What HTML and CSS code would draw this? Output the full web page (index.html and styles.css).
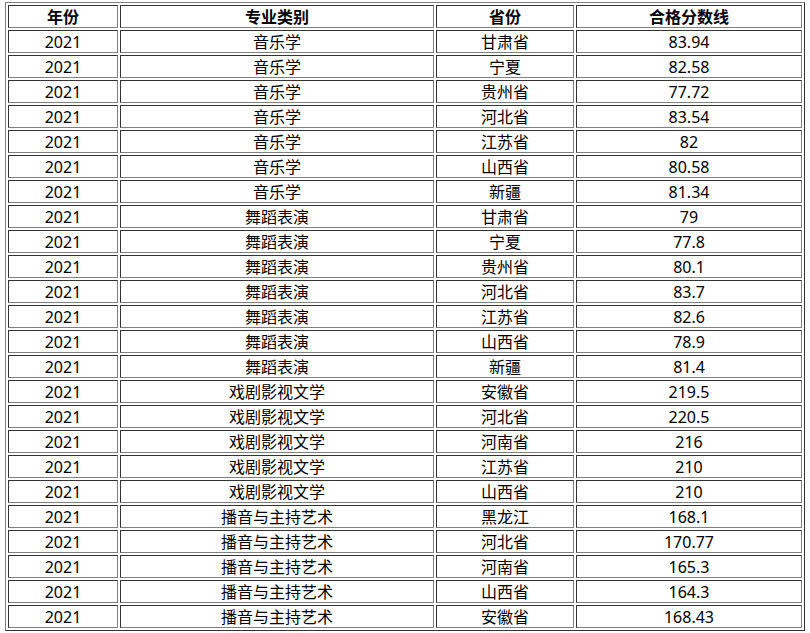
FILE: index.html
```html
<!DOCTYPE html>
<html lang="zh-CN">
<head>
<meta charset="utf-8">
<title>合格分数线</title>
<link rel="stylesheet" href="styles.css">
</head>
<body>
<table class="score-table">
<thead>
<tr><th class="c-year">年份</th><th class="c-major">专业类别</th><th class="c-prov">省份</th><th class="c-score">合格分数线</th></tr>
</thead>
<tbody>
<tr><td>2021</td><td>音乐学</td><td>甘肃省</td><td>83.94</td></tr>
<tr><td>2021</td><td>音乐学</td><td>宁夏</td><td>82.58</td></tr>
<tr><td>2021</td><td>音乐学</td><td>贵州省</td><td>77.72</td></tr>
<tr><td>2021</td><td>音乐学</td><td>河北省</td><td>83.54</td></tr>
<tr><td>2021</td><td>音乐学</td><td>江苏省</td><td>82</td></tr>
<tr><td>2021</td><td>音乐学</td><td>山西省</td><td>80.58</td></tr>
<tr><td>2021</td><td>音乐学</td><td>新疆</td><td>81.34</td></tr>
<tr><td>2021</td><td>舞蹈表演</td><td>甘肃省</td><td>79</td></tr>
<tr><td>2021</td><td>舞蹈表演</td><td>宁夏</td><td>77.8</td></tr>
<tr><td>2021</td><td>舞蹈表演</td><td>贵州省</td><td>80.1</td></tr>
<tr><td>2021</td><td>舞蹈表演</td><td>河北省</td><td>83.7</td></tr>
<tr><td>2021</td><td>舞蹈表演</td><td>江苏省</td><td>82.6</td></tr>
<tr><td>2021</td><td>舞蹈表演</td><td>山西省</td><td>78.9</td></tr>
<tr><td>2021</td><td>舞蹈表演</td><td>新疆</td><td>81.4</td></tr>
<tr><td>2021</td><td>戏剧影视文学</td><td>安徽省</td><td>219.5</td></tr>
<tr><td>2021</td><td>戏剧影视文学</td><td>河北省</td><td>220.5</td></tr>
<tr><td>2021</td><td>戏剧影视文学</td><td>河南省</td><td>216</td></tr>
<tr><td>2021</td><td>戏剧影视文学</td><td>江苏省</td><td>210</td></tr>
<tr><td>2021</td><td>戏剧影视文学</td><td>山西省</td><td>210</td></tr>
<tr><td>2021</td><td>播音与主持艺术</td><td>黑龙江</td><td>168.1</td></tr>
<tr><td>2021</td><td>播音与主持艺术</td><td>河北省</td><td>170.77</td></tr>
<tr><td>2021</td><td>播音与主持艺术</td><td>河南省</td><td>165.3</td></tr>
<tr><td>2021</td><td>播音与主持艺术</td><td>山西省</td><td>164.3</td></tr>
<tr><td>2021</td><td>播音与主持艺术</td><td>安徽省</td><td>168.43</td></tr>
</tbody>
</table>
</body>
</html>
```
FILE: styles.css
```css
html, body {
  background: #ffffff;
}
body {
  margin: 2px 0 0 5px;
  font-family: "Noto Sans", "Noto Sans CJK SC", sans-serif;
  font-size: 16px;
  color: #000000;
}
.score-table {
  width: 800px;
  table-layout: fixed;
  border-collapse: separate;
  border-spacing: 2px;
  border-style: solid;
  border-width: 1px;
  border-color: #808080 #333333 #333333 #808080;
}
.score-table th,
.score-table td {
  box-sizing: border-box;
  height: 23px;
  padding: 1px 1px 0;
  line-height: 20px;
  text-align: center;
  vertical-align: middle;
  white-space: nowrap;
  border-style: solid;
  border-width: 1px;
  border-color: #333333 #808080 #808080 #333333;
}
.score-table th {
  font-weight: bold;
}
.c-year { width: 110px; }
.c-major { width: 314px; }
.c-prov { width: 138px; }
.c-score { width: 226px; }
```
